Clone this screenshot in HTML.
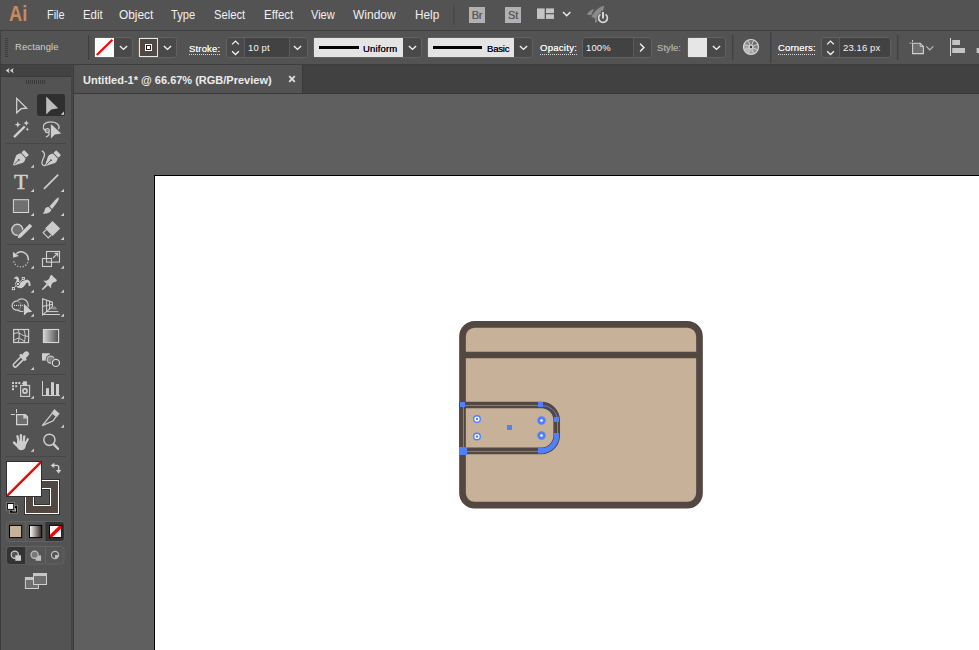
<!DOCTYPE html>
<html><head><meta charset="utf-8"><title>Adobe Illustrator</title>
<style>
*{box-sizing:border-box;margin:0;padding:0}
html,body{width:979px;height:650px;overflow:hidden;background:#535353;font-family:"Liberation Sans",sans-serif;}
#app{position:relative;width:979px;height:650px;overflow:hidden;background:#535353}
.abs{position:absolute}
.t{position:absolute;white-space:nowrap;line-height:1;transform-origin:0 0}
/* menu */
#menubar{position:absolute;left:0;top:0;width:979px;height:30px;background:#535353}
.mi{position:absolute;top:8px;font-size:12px;color:#f0f0f0;white-space:nowrap;line-height:14px;transform-origin:0 50%}
/* control bar */
#ctrl{position:absolute;left:0;top:30px;width:979px;height:35px;background:#535353;border-top:1px solid #3e3e3e;border-bottom:1px solid #3e3e3e}
.lbl{position:absolute;top:42px;font-size:9.5px;letter-spacing:0.17px;color:#f4f4f4;line-height:12px;white-space:nowrap;transform-origin:0 50%;text-shadow:0 0 0.6px #f4f4f4}
.dots{position:absolute;top:54px;height:1px;background:repeating-linear-gradient(90deg,#d8d8d8 0 1px,transparent 1px 2px)}
.box{position:absolute;top:37px;height:21px;border:1px solid #616161;background:#494949}
.val{position:absolute;top:42px;font-size:9.5px;letter-spacing:0.1px;color:#f4f4f4;line-height:12px;white-space:nowrap;transform-origin:0 50%}
.sep{position:absolute;width:1px;background:#404040;box-shadow:1px 0 0 #4c4c4c}
/* tab bar */
#tabbar{position:absolute;left:74px;top:65px;width:905px;height:29px;background:#414141;border-bottom:1px solid #393939}
#tab{position:absolute;left:0;top:0;width:229px;height:28px;background:#535353;border-right:1px solid #3a3a3a}
#canvas{position:absolute;left:74px;top:94px;width:905px;height:556px;background:#5f5f5f}
#tools{position:absolute;left:0;top:65px;width:72px;height:585px;background:#535353}
</style></head><body>
<div id="app">

<!-- MENU BAR -->
<div id="menubar">
  <div class="t" id="ailogo" style="left:8.8px;top:2.5px;font-size:22px;font-weight:bold;color:#c68a61;transform:scaleX(.83)">Ai</div>
  <div class="mi" style="left:47.4px;transform:scaleX(0.907)">File</div>
  <div class="mi" style="left:82.5px;transform:scaleX(0.95)">Edit</div>
  <div class="mi" style="left:119.3px;transform:scaleX(0.99)">Object</div>
  <div class="mi" style="left:171.2px;transform:scaleX(0.93)">Type</div>
  <div class="mi" style="left:213.8px;transform:scaleX(0.936)">Select</div>
  <div class="mi" style="left:263.8px;transform:scaleX(0.96)">Effect</div>
  <div class="mi" style="left:310.5px;transform:scaleX(0.92)">View</div>
  <div class="mi" style="left:353px">Window</div>
  <div class="mi" style="left:414.5px;transform:scaleX(0.98)">Help</div>
  <div class="sep" style="left:453px;top:5px;height:20px;background:#494949"></div>
  <div class="abs" style="left:469px;top:7px;width:16px;height:16px;background:#b1b1b1;color:#5a5a5a;font-size:11px;text-align:center;line-height:17px;letter-spacing:-0.2px;text-shadow:0 0 0.5px #5a5a5a">Br</div>
  <div class="abs" style="left:505px;top:7px;width:16px;height:16px;background:#b1b1b1;color:#5a5a5a;font-size:11px;text-align:center;line-height:17px;letter-spacing:-0.2px;text-shadow:0 0 0.5px #5a5a5a">St</div>
  <svg class="abs" style="left:530px;top:0" width="90" height="30" viewBox="530 0 90 30">
    <g fill="#c4c4c4"><rect x="537" y="8.4" width="7.7" height="10.5"/><rect x="546" y="8.4" width="8" height="4.7"/><rect x="546" y="14.3" width="8" height="4.6"/></g>
    <path d="M563 12 L566.7 15.7 L570.4 12" fill="none" stroke="#ececec" stroke-width="1.4"/>
    <g fill="#8a8a8a">
      <path d="M604 5.8 C599.5 6.6 594.6 10.6 591.4 16.6 L595.4 19 C600.4 16.4 604 11.4 604 5.8 Z"/>
      <path d="M594.2 9 C591 9.6 588.2 11.8 586.8 14.6 L591.2 15.2 C591.9 13 592.9 11 594.2 9 Z"/>
      <path d="M596.8 18.6 L597.5 20.8 C596.8 21.9 596 22.6 595 23 L595 19.4 Z"/>
    </g>
    <circle cx="603" cy="18" r="5.8" fill="#535353"/>
    <line x1="603" y1="10.8" x2="603" y2="18.6" stroke="#535353" stroke-width="4.2"/>
    <path d="M600.5 14.4 A4.4 4.4 0 1 0 605.5 14.4" fill="none" stroke="#d6d6d6" stroke-width="1.7"/>
    <line x1="603" y1="12.1" x2="603" y2="18.5" stroke="#d6d6d6" stroke-width="2"/>
  </svg>
</div>

<!-- CONTROL BAR -->
<div id="ctrl"></div>
<div class="abs" style="left:0;top:31px;width:1px;height:33px;background:#404040"></div>
<!-- CONTROL BAR CONTENT -->
<div id="ctrlc">
  <!-- grip -->
  <svg class="abs" style="left:4px;top:38px" width="6" height="20" viewBox="0 0 6 20"><g fill="#3c3c3c"><rect x="1" y="0" width="3" height="1"/><rect x="1" y="2" width="3" height="1"/><rect x="1" y="4" width="3" height="1"/><rect x="1" y="6" width="3" height="1"/><rect x="1" y="8" width="3" height="1"/><rect x="1" y="10" width="3" height="1"/><rect x="1" y="12" width="3" height="1"/><rect x="1" y="14" width="3" height="1"/><rect x="1" y="16" width="3" height="1"/><rect x="1" y="18" width="3" height="1"/></g></svg>
  <div class="t" id="rectlbl" style="left:15px;top:41px;font-size:9.5px;color:#cecece;line-height:12px;letter-spacing:0.1px">Rectangle</div>
  <div class="sep" style="left:88px;top:35px;height:25px"></div>

  <!-- fill swatch -->
  <div class="box" style="left:94px;width:39px;border-radius:3px"></div>
  <div class="abs" style="left:95px;top:38px;width:19px;height:19px;background:#fff"></div>
  <svg class="abs" style="left:95px;top:38px" width="19" height="19" viewBox="0 0 19 19"><line x1="1.8" y1="17" x2="17.4" y2="1.8" stroke="#ff0000" stroke-width="2.2"/></svg>
  <svg class="abs chev" style="left:119px;top:45px" width="9" height="6" viewBox="0 0 9 6"><path d="M0.9 0.9 L4.5 4.4 L8.1 0.9" fill="none" stroke="#f4f4f4" stroke-width="1.35"/></svg>

  <!-- stroke swatch -->
  <div class="box" style="left:138px;width:39px;border-radius:3px"></div>
  <div class="abs" style="left:139px;top:38px;width:19px;height:19px;background:#534741;border:1px solid #e8e8e8"></div>
  <div class="abs" style="left:145px;top:44px;width:7px;height:7px;background:#fff"></div><div class="abs" style="left:146px;top:45px;width:5px;height:5px;background:#222"></div><div class="abs" style="left:147px;top:46px;width:3px;height:3px;background:#fff"></div>
  <svg class="abs chev" style="left:163px;top:45px" width="9" height="6" viewBox="0 0 9 6"><path d="M0.9 0.9 L4.5 4.4 L8.1 0.9" fill="none" stroke="#f4f4f4" stroke-width="1.35"/></svg>

  <!-- Stroke -->
  <div class="lbl" id="lblStroke" style="left:189px;top:43px">Stroke:</div><div class="dots" style="left:189px;width:32px"></div>
  <div class="box" style="left:226px;width:82px;border-radius:3px"></div>
  <div class="abs" style="left:244px;top:38px;width:46px;height:19px;background:#424242;border-left:1px solid #5a5a5a;border-right:1px solid #5a5a5a"></div>
  <svg class="abs" style="left:231px;top:40px" width="9" height="16" viewBox="0 0 9 16"><path d="M1.1 4.4 L4.5 1.1 L7.9 4.4 M1.1 11.2 L4.5 14.5 L7.9 11.2" fill="none" stroke="#f2f2f2" stroke-width="1.3"/></svg>
  <div class="val" id="v10pt" style="left:248px">10 pt</div>
  <svg class="abs chev" style="left:293px;top:45px" width="9" height="6" viewBox="0 0 9 6"><path d="M0.9 0.9 L4.5 4.4 L8.1 0.9" fill="none" stroke="#f4f4f4" stroke-width="1.35"/></svg>

  <!-- Uniform -->
  <div class="box" style="left:313px;width:109px;border-radius:3px"></div>
  <div class="abs" style="left:314px;top:38px;width:89px;height:19px;background:#e4e4e4"></div>
  <div class="abs" style="left:319px;top:46px;width:40px;height:3px;background:#000"></div>
  <div class="t" id="vUniform" style="left:363px;top:42px;font-size:9.5px;color:#0c0c22;text-shadow:0 0 0.5px #0c0c22;line-height:13px;letter-spacing:0.14px">Uniform</div>
  <svg class="abs chev" style="left:408px;top:45px" width="9" height="6" viewBox="0 0 9 6"><path d="M0.9 0.9 L4.5 4.4 L8.1 0.9" fill="none" stroke="#f4f4f4" stroke-width="1.35"/></svg>

  <!-- Basic -->
  <div class="box" style="left:427px;width:106px;border-radius:3px"></div>
  <div class="abs" style="left:428px;top:38px;width:86px;height:19px;background:#e4e4e4"></div>
  <div class="abs" style="left:433px;top:46px;width:49px;height:3px;background:#000"></div>
  <div class="t" id="vBasic" style="left:487px;top:42px;font-size:9.5px;color:#0c0c22;text-shadow:0 0 0.5px #0c0c22;line-height:13px;letter-spacing:-0.2px">Basic</div>
  <svg class="abs chev" style="left:519px;top:45px" width="9" height="6" viewBox="0 0 9 6"><path d="M0.9 0.9 L4.5 4.4 L8.1 0.9" fill="none" stroke="#f4f4f4" stroke-width="1.35"/></svg>

  <!-- Opacity -->
  <div class="lbl" id="lblOpacity" style="left:540px;letter-spacing:0.28px">Opacity:</div><div class="dots" style="left:540px;width:38px"></div>
  <div class="box" style="left:582px;width:70px;border-radius:3px"></div>
  <div class="abs" style="left:583px;top:38px;width:51px;height:19px;background:#424242;border-right:1px solid #5a5a5a;border-radius:2px 0 0 2px"></div>
  <div class="val" id="v100" style="left:586px">100%</div>
  <svg class="abs" style="left:639px;top:42px" width="7" height="11" viewBox="0 0 7 11"><path d="M1.1 1.8 L4.9 5.6 L1.1 9.4" fill="none" stroke="#f4f4f4" stroke-width="1.4"/></svg>

  <!-- Style -->
  <div class="t" id="lblStyle" style="left:657px;top:42px;font-size:9.5px;color:#a8a8a8;line-height:12px;text-shadow:0 0 0.6px #a8a8a8;letter-spacing:0.05px">Style:</div>
  <div class="box" style="left:687px;width:39px;border-radius:3px"></div>
  <div class="abs" style="left:688px;top:38px;width:19px;height:19px;background:#e6e6e6"></div>
  <svg class="abs chev" style="left:712px;top:45px" width="9" height="6" viewBox="0 0 9 6"><path d="M0.9 0.9 L4.5 4.4 L8.1 0.9" fill="none" stroke="#f4f4f4" stroke-width="1.35"/></svg>

  <div class="sep" style="left:732px;top:35px;height:25px"></div>
  <!-- recolor wheel -->
  <svg class="abs" style="left:742px;top:38px" width="18" height="18" viewBox="-9 -9 18 18">
    <path d="M0 0 L-2.83 -6.84 A7.4 7.4 0 0 1 2.83 -6.84 Z" fill="#787878"/><path d="M0 0 L2.83 -6.84 A7.4 7.4 0 0 1 6.84 -2.83 Z" fill="#6c6c6c"/><path d="M0 0 L6.84 -2.83 A7.4 7.4 0 0 1 6.84 2.83 Z" fill="#828282"/><path d="M0 0 L6.84 2.83 A7.4 7.4 0 0 1 2.83 6.84 Z" fill="#999999"/><path d="M0 0 L2.83 6.84 A7.4 7.4 0 0 1 -2.83 6.84 Z" fill="#a8a8a8"/><path d="M0 0 L-2.83 6.84 A7.4 7.4 0 0 1 -6.84 2.83 Z" fill="#b8b8b8"/><path d="M0 0 L-6.84 2.83 A7.4 7.4 0 0 1 -6.84 -2.83 Z" fill="#a4a4a4"/><path d="M0 0 L-6.84 -2.83 A7.4 7.4 0 0 1 -2.83 -6.84 Z" fill="#8c8c8c"/>
    <g stroke="#d6d6d6" stroke-width="0.9"><line x1="0" y1="0" x2="6.84" y2="2.83"/><line x1="0" y1="0" x2="2.83" y2="6.84"/><line x1="0" y1="0" x2="-2.83" y2="6.84"/><line x1="0" y1="0" x2="-6.84" y2="2.83"/><line x1="0" y1="0" x2="-6.84" y2="-2.83"/><line x1="0" y1="0" x2="-2.83" y2="-6.84"/><line x1="0" y1="0" x2="2.83" y2="-6.84"/><line x1="0" y1="0" x2="6.84" y2="-2.83"/></g>
    <circle r="7.5" fill="none" stroke="#d8d8d8" stroke-width="1.2"/>
    <circle r="2.5" fill="#d0d0d0"/><circle r="1.2" fill="#3c3c3c"/>
  </svg>
  <div class="sep" style="left:770px;top:32px;height:31px"></div>

  <!-- Corners -->
  <div class="lbl" id="lblCorners" style="left:778px">Corners:</div><div class="dots" style="left:778px;width:38px"></div>
  <div class="box" style="left:821px;width:70px;border-radius:3px"></div>
  <div class="abs" style="left:839px;top:38px;width:51px;height:19px;background:#424242;border-left:1px solid #5a5a5a;border-radius:0 2px 2px 0"></div>
  <svg class="abs" style="left:826px;top:40px" width="9" height="16" viewBox="0 0 9 16"><path d="M1.1 4.4 L4.5 1.1 L7.9 4.4 M1.1 11.2 L4.5 14.5 L7.9 11.2" fill="none" stroke="#f2f2f2" stroke-width="1.3"/></svg>
  <div class="val" id="v2316" style="left:843px">23.16 px</div>
  <div class="sep" style="left:897px;top:35px;height:25px"></div>

  <!-- shape icon -->
  <svg class="abs" style="left:906px;top:38px" width="30" height="18" viewBox="906 38 30 18">
    <path d="M912.5 40 V42 M909.6 43.2 H911.6" stroke="#c4c4c4" stroke-width="1" fill="none"/>
    <path d="M912.6 43.2 H920.2 L923.4 46.4 V53.6 H912.6 Z" fill="#6f6f6f" stroke="#d0d0d0" stroke-width="1.1"/>
    <path d="M920.2 43.2 V46.4 H923.4" fill="none" stroke="#d0d0d0" stroke-width="0.9"/>
    <path d="M926.3 46.3 L929.8 49.8 L933.3 46.3" fill="none" stroke="#bdbdbd" stroke-width="1.2"/>
  </svg>
  <!-- align icon -->
  <svg class="abs" style="left:946px;top:36px" width="33" height="22" viewBox="946 36 33 22">
    <rect x="950" y="38" width="1" height="18" fill="#d6d6d6"/>
    <rect x="952.2" y="40" width="7.8" height="5" fill="#c4c4c4"/>
    <rect x="952.2" y="48" width="12.8" height="5" fill="#c4c4c4"/>
    <rect x="976.6" y="48" width="3" height="5" fill="#c4c4c4"/>
  </svg>
</div>


<!-- TOOLS -->
<div id="tools"></div>
<!-- TOOLS PANEL -->
<svg class="abs" id="toolsvg" style="left:0;top:0" width="80" height="650" viewBox="0 0 80 650">
  <defs>
    <linearGradient id="gradTool" x1="0" x2="1" y1="0" y2="0"><stop offset="0" stop-color="#d4d4d4"/><stop offset="1" stop-color="#4c4c4c"/></linearGradient>
    <linearGradient id="gradSw" x1="0" x2="1" y1="0" y2="0"><stop offset="0" stop-color="#ffffff"/><stop offset="1" stop-color="#2e2320"/></linearGradient>
    <path id="tri" d="M0 0 L0 -3.3 L-3.3 0 Z" fill="#cfcfcf"/>
    <clipPath id="clipFill"><rect x="7" y="462" width="34" height="34"/></clipPath>
  </defs>
  <!-- frame -->
  <rect x="0" y="65" width="1" height="585" fill="#3c3c3c"/>
  <rect x="71" y="65" width="1" height="585" fill="#434343"/><rect x="72" y="65" width="1" height="585" fill="#484848"/><rect x="73" y="65" width="1" height="585" fill="#3a3a3a"/>
  <rect x="1" y="65" width="70" height="11" fill="#424242"/><rect x="1" y="76" width="70" height="1" fill="#3b3b3b"/>
  <!-- collapse arrows -->
  <g fill="#d4d4d4">
    <path d="M9.5 67.9 L5.7 70.6 L9.5 73.3 L8.7 70.6 Z"/>
    <path d="M13.6 67.9 L9.8 70.6 L13.6 73.3 L12.8 70.6 Z"/>
  </g>
  <!-- grip -->
  <g fill="#3b3b3b">
    <rect x="26" y="80" width="1" height="4"/><rect x="28" y="80" width="1" height="4"/><rect x="30" y="80" width="1" height="4"/><rect x="32" y="80" width="1" height="4"/><rect x="34" y="80" width="1" height="4"/><rect x="36" y="80" width="1" height="4"/><rect x="38" y="80" width="1" height="4"/><rect x="40" y="80" width="1" height="4"/><rect x="42" y="80" width="1" height="4"/><rect x="44" y="80" width="1" height="4"/>
  </g>
  <!-- separators -->
  <g fill="#474747">
    <rect x="6" y="143" width="60" height="1"/><rect x="6" y="244" width="60" height="1"/><rect x="6" y="321" width="60" height="1"/><rect x="6" y="374" width="60" height="1"/><rect x="6" y="403" width="60" height="1"/><rect x="6" y="456" width="60" height="1"/>
  </g>
  <!-- sub-tool triangles -->
  <use href="#tri" x="64.0" y="114.8"/>
  <use href="#tri" x="34.0" y="167.8"/>
  <use href="#tri" x="34.0" y="192.0"/><use href="#tri" x="64.0" y="192.0"/>
  <use href="#tri" x="34.0" y="216.0"/><use href="#tri" x="64.0" y="216.0"/>
  <use href="#tri" x="34.0" y="240.0"/><use href="#tri" x="64.0" y="240.0"/>
  <use href="#tri" x="34.0" y="268.8"/><use href="#tri" x="64.0" y="268.8"/>
  <use href="#tri" x="34.0" y="292.8"/><use href="#tri" x="64.0" y="292.8"/>
  <use href="#tri" x="34.0" y="316.8"/><use href="#tri" x="64.0" y="316.8"/>
  <use href="#tri" x="34.0" y="370.1"/>
  <use href="#tri" x="34.0" y="398.8"/><use href="#tri" x="64.0" y="398.8"/>
  <use href="#tri" x="64.0" y="427.8"/>
  <use href="#tri" x="34.0" y="451.8"/>

  <!-- row1: selection / direct selection -->
  <path d="M16.7 98.4 L16.7 112.8 L21.2 108.7 L26.7 108.2 Z" fill="none" stroke="#d6d6d6" stroke-width="1.2" stroke-linejoin="miter"/>
  <rect x="37" y="94" width="28" height="22" rx="2.5" fill="#2f2f2f"/>
  <path d="M46.2 96.6 L46.2 114.6 L51.3 109.4 L58.2 108.3 Z" fill="#bcbcbc"/>
  <use href="#tri" x="64.0" y="114.8"/>

  <!-- row2: magic wand / lasso -->
  <g fill="#cfcfcf">
    <path d="M13.2 136.3 L24 125.6 L25.6 127.2 L14.8 137.9 Z"/>
    <path d="M17.80 121.40 L18.68 123.72 L21.00 124.60 L18.68 125.48 L17.80 127.80 L16.92 125.48 L14.60 124.60 L16.92 123.72 Z"/>
    <path d="M26.30 120.20 L27.08 122.32 L29.20 123.10 L27.08 123.88 L26.30 126.00 L25.52 123.88 L23.40 123.10 L25.52 122.32 Z"/>
    <path d="M27.30 127.20 L27.87 128.63 L29.30 129.20 L27.87 129.77 L27.30 131.20 L26.73 129.77 L25.30 129.20 L26.73 128.63 Z"/>
  </g>
  <g fill="none" stroke="#cdcdcd" stroke-width="1.25" stroke-linecap="round">
    <path d="M58.7 128.8 C60 125.6 57.4 122 51 121.9 C45 121.9 42.5 125 43.4 128 C43.8 129.2 44.4 129.9 45.3 130.4"/>
    <circle cx="47.3" cy="130.5" r="2"/>
    <path d="M48.7 132.2 C49.7 134.4 48.7 136 46.3 136.8"/>
  </g>
  <path d="M46.6 129.5 L48.2 130.5 L46.6 131.5 Z" fill="#cdcdcd"/>
  <path d="M50.9 124 L50.9 138.4 L54.9 134.5 L61.2 133.6 Z" fill="#cdcdcd" stroke="#535353" stroke-width="0.8" paint-order="stroke"/>

  <!-- row3: pen / curvature -->
  <g transform="translate(13.4 165.2) rotate(45.7)">
    <path d="M-0.8 -0.3 L-5 -8.6 Q-5.5 -10.6 -3.5 -13.7 L3.5 -13.7 Q5.5 -10.6 5 -8.6 L0.8 -0.3 Q0 0.4 -0.8 -0.3 Z" fill="#cdcdcd"/>
    <line x1="0" y1="-1.4" x2="0" y2="-7.2" stroke="#535353" stroke-width="0.9"/>
    <circle cx="0" cy="-7.6" r="1" fill="#535353"/>
    <rect x="-3.45" y="-18.3" width="6.9" height="3.8" rx="0.8" fill="#cdcdcd"/>
  </g>
  <g transform="translate(45.5 165.5) rotate(45.7)">
    <path d="M-0.8 -0.3 L-5 -8.6 Q-5.5 -10.6 -3.5 -13.7 L3.5 -13.7 Q5.5 -10.6 5 -8.6 L0.8 -0.3 Q0 0.4 -0.8 -0.3 Z" fill="#cdcdcd"/>
    <line x1="0" y1="-1.4" x2="0" y2="-7.2" stroke="#535353" stroke-width="0.9"/>
    <circle cx="0" cy="-7.6" r="1" fill="#535353"/>
    <rect x="-3.45" y="-18.3" width="6.9" height="3.8" rx="0.8" fill="#cdcdcd"/>
  </g>
  <path d="M42.2 151.2 C44.6 152.4 45.2 154.6 43.8 157.4 C42.2 160.4 40.8 163 42.6 164.8 C43.4 165.5 44.4 165.6 45.2 165.5" fill="none" stroke="#cdcdcd" stroke-width="1.3" stroke-linecap="round"/>

  <!-- row4: type / line -->
  <text x="0" y="0" transform="translate(14.1 188.8) scale(1.07 1)" font-family="'Liberation Serif',serif" font-size="21.2" fill="#d0d0d0" stroke="#d0d0d0" stroke-width="0.45">T</text>
  <line x1="44" y1="188.8" x2="58.2" y2="174.6" stroke="#cfcfcf" stroke-width="1.7"/>

  <!-- row5: rectangle / brush -->
  <rect x="13.4" y="199.7" width="15.2" height="12.8" fill="#707070" stroke="#d8d8d8" stroke-width="1"/>
  <g fill="#cdcdcd" transform="translate(-0.8 0)">
    <path d="M59.3 197.6 C60.6 198.6 58 203.4 52.9 208.9 L50.3 206.5 C55.2 201 58.4 197 59.3 197.6 Z"/>
    <path d="M49.6 207.2 L52.1 209.6 C51.6 212.6 48.2 214.2 43.2 213.7 C45.6 212.6 45.1 210.2 46 208.6 C46.9 207.3 48.4 206.8 49.6 207.2 Z"/>
  </g>

  <!-- row6: shaper / eraser -->
  <circle cx="17.3" cy="229.8" r="5.5" fill="#707070" stroke="#cfcfcf" stroke-width="1.4"/>
  <g transform="translate(17.7 238.3) rotate(45)">
    <path d="M0 0 L-1.8 -2.8 L-1.8 -18.8 L1.8 -18.8 L1.8 -2.8 Z" fill="#cfcfcf" stroke="#535353" stroke-width="1.2" paint-order="stroke"/>
  </g>
  <path d="M52.5 220.9 L60.1 228.5 L52.6 236.1 L45 228.5 Z" fill="#cbcbcb"/>
  <path d="M46 229.9 L43.1 232.7 L48.3 237.9 L51.1 235" fill="none" stroke="#cfcfcf" stroke-width="1.2" stroke-linejoin="round"/>

  <!-- row7: rotate / scale -->
  <g fill="none" stroke="#cfcfcf">
    <path d="M16.4 253.6 A7.3 7.3 0 0 1 28.2 260.4" stroke-width="1.5"/>
    <path d="M27.7 262.3 A7.3 7.3 0 0 1 13.8 261.4" stroke-width="1.3" stroke-dasharray="1.1 1.75"/>
  </g>
  <path d="M12.9 251.8 L13.1 257.8 L18.8 256 Z" fill="#cfcfcf"/>
  <g fill="none" stroke="#cfcfcf" stroke-width="1.1">
    <rect x="46.5" y="251.5" width="13" height="10.6"/>
    <rect x="42.5" y="258.5" width="9" height="8"/>
    <path d="M53 258 L57.6 253.4 M54.6 253.4 H57.7 V256.5"/>
  </g>

  <!-- row8: width / puppet pin -->
  <path d="M14 279.2 C14 276.4 17.4 275.4 18.4 277.6 C19.2 279.4 19.2 280.6 19.8 281.4 C21.4 281.2 23.6 280.6 25.4 280 C28.6 278.8 31 281.4 30.5 286 L28.6 286 C28.8 283.6 28.2 282.4 27.2 282.6 C25.6 283 24.8 287.6 20.8 288.2 C17.6 288.4 15.8 287 15.6 284.6 C15.4 282.4 16.8 281 16.6 279.4 C16.4 278.2 15 278.4 14 279.2 Z" fill="#cfcfcf"/>
  <line x1="13.6" y1="288.3" x2="23.3" y2="278.5" stroke="#535353" stroke-width="2"/>
  <line x1="13.6" y1="288.3" x2="23.3" y2="278.5" stroke="#cfcfcf" stroke-width="0.9"/>
  <circle cx="17.9" cy="284" r="1.7" fill="#d6d6d6" stroke="#535353" stroke-width="1"/>
  <circle cx="17.9" cy="284" r="2.6" fill="none" stroke="#cfcfcf" stroke-width="0.6"/>
  <rect x="22.3" y="277.4" width="2.1" height="2.1" fill="#535353" stroke="#d6d6d6" stroke-width="0.9"/>
  <rect x="12.3" y="287.4" width="2.3" height="2.3" fill="#535353" stroke="#d6d6d6" stroke-width="0.9"/>
  <g transform="translate(42.1 289.7) rotate(45)" fill="#cdcdcd">
    <path d="M-0.7 -0.4 Q0 0.5 0.7 -0.4 L1 -7.4 L-1 -7.4 Z"/>
    <path d="M-5.7 -7.3 L5.7 -7.3 C3.4 -8.6 2.6 -10.5 2.7 -12.8 L4 -15.2 L4 -17.2 L-4 -17.2 L-4 -15.2 L-2.7 -12.8 C-2.6 -10.5 -3.4 -8.6 -5.7 -7.3 Z"/>
  </g>

  <!-- row9: shape builder / perspective grid -->
  <path d="M17.1 301.13 A4.5 4.5 0 1 0 17.76 309.95 A6.3 6.3 0 1 0 17.1 301.13 Z" fill="none" stroke="#cfcfcf" stroke-width="1.2"/>
  <path d="M17.1 301.13 A4.5 4.5 0 0 1 17.76 309.95" fill="none" stroke="#8c8c8c" stroke-width="1"/>
  <g fill="#f0f0f0"><rect x="14" y="304.9" width="1" height="1"/><rect x="16" y="304.9" width="1" height="1"/><rect x="18.1" y="304.9" width="1" height="1"/><rect x="20.1" y="304.9" width="1" height="1"/><rect x="22.2" y="304.9" width="1" height="1"/></g>
  <path d="M23.9 303.7 L23.9 315.6 L27.3 312.4 L32.2 311.7 Z" fill="#cfcfcf" stroke="#535353" stroke-width="1" paint-order="stroke"/>
  <g fill="none" stroke="#d2d2d2" stroke-width="1.1">
    <path d="M42.6 298.8 V314.8 L52.4 306.6 V302.2 Z" stroke-linejoin="miter"/>
    <path d="M46.6 300.2 V311.4 M49.6 301.2 V309 M42.6 306.4 L52.4 304.3" stroke-width="1"/>
    <path d="M43 314.5 H60 M46.8 311.6 H58.4" stroke-width="1"/>
  </g>
  <path d="M50.2 309.4 L53 306.6 L55.4 306.6 L57.2 309.4 Z" fill="#8c8c8c"/>

  <!-- row10: mesh / gradient -->
  <g fill="none" stroke="#cfcfcf" stroke-width="1.2">
    <rect x="13.6" y="329.5" width="15" height="13"/>
    <path d="M18 329.5 C19.6 333 19.8 338 18 342.5 M23.8 329.5 C25.8 334 25.6 338 24 342.5 M13.5 334.2 C16 332.6 18 332.4 20 333.5 C22 334.8 24 336.3 28.6 336.4 M13.5 340.8 C16 338.6 18 338 19.5 338.4 C21.5 339 23 340.5 24.4 341.4" stroke-width="1"/>
  </g>
  <rect x="43.4" y="329.5" width="15.2" height="13" fill="url(#gradTool)" stroke="#d8d8d8" stroke-width="1.1"/>

  <!-- row11: eyedropper / blend -->
  <g transform="translate(13.9 366.4) rotate(45)">
    <path d="M-1.9 -1.6 Q-1.9 0 0 0 Q1.9 0 1.9 -1.6 L1.9 -11.8 L-1.9 -11.8 Z" fill="none" stroke="#cdcdcd" stroke-width="1.5"/>
    <rect x="-4.2" y="-14.2" width="8.4" height="2.8" rx="0.7" fill="#cdcdcd"/>
    <rect x="-2.6" y="-20.3" width="5.2" height="7.4" rx="2.6" fill="#cdcdcd"/>
  </g>
  <rect x="42" y="353.2" width="7.8" height="7.4" fill="#cdcdcd"/>
  <circle cx="50.7" cy="359.6" r="5" fill="#535353"/>
  <circle cx="50.7" cy="359.6" r="3.6" fill="#868686" stroke="#cdcdcd" stroke-width="1.1"/>
  <circle cx="55.9" cy="362.9" r="4.9" fill="#535353"/>
  <circle cx="55.9" cy="362.9" r="3.6" fill="#535353" stroke="#dadada" stroke-width="1.2"/>

  <!-- row12: symbol sprayer / graph -->
  <g fill="#cfcfcf">
    <rect x="12" y="382" width="2" height="2"/><rect x="15.2" y="382" width="2" height="2"/><rect x="18.3" y="382" width="2" height="2"/>
    <rect x="12" y="385.2" width="2" height="2"/><rect x="15.2" y="385.2" width="2" height="2"/>
    <rect x="12" y="388.2" width="2" height="2"/>
    <rect x="23" y="381.3" width="3.9" height="3.8"/>
    <rect x="22" y="382.8" width="1.2" height="1.4"/>
  </g>
  <rect x="20.6" y="385.4" width="9" height="11" fill="#5a5a5a" stroke="#cfcfcf" stroke-width="1.1"/>
  <circle cx="25" cy="391" r="2.1" fill="none" stroke="#cfcfcf" stroke-width="1.6"/>
  <g fill="#cfcfcf">
    <rect x="42" y="381" width="1" height="15"/><rect x="42" y="395" width="18" height="1"/>
    <rect x="46" y="388.2" width="3" height="7"/><rect x="51" y="382.2" width="3" height="13"/><rect x="56" y="384" width="3" height="11.2"/>
  </g>

  <!-- row13: artboard / slice -->
  <g fill="#d2d2d2"><rect x="16" y="409" width="1" height="4"/><rect x="10.8" y="414" width="4.2" height="1"/></g>
  <path d="M16.6 414.6 H25.4 L27.5 416.8 V424.6 H16.6 Z" fill="#6e6e6e" stroke="#d4d4d4" stroke-width="1.2"/>
  <path d="M23.3 414.6 H25.4 L27.5 416.8 V418.4 H23.3 Z" fill="#c8c8c8"/>
  <path d="M54.4 409.5 L59.2 413.7 L56.5 417 L51.9 413 Z" fill="#cdcdcd" stroke="#cdcdcd" stroke-width="0.8" stroke-linejoin="round"/>
  <path d="M52.2 413.4 L42.3 425.7 L53.2 420.8 L55.8 416.9" fill="none" stroke="#cdcdcd" stroke-width="1.3" stroke-linejoin="miter"/>

  <!-- row14: hand / zoom -->
  <g fill="none" stroke="#cdcdcd" stroke-linecap="round">
    <path d="M18.5 441.4 L17.4 436.1" stroke-width="2.2"/><path d="M20.9 441 L20.9 435.1" stroke-width="2.4"/><path d="M23.7 441.4 L24.3 436.3" stroke-width="2.3"/><path d="M25.7 443 L27.8 439.2" stroke-width="2.2"/>
    <path d="M18.4 446.8 L14 442.6" stroke-width="2.5"/>
  </g>
  <path d="M17.3 440.6 L26.7 441.6 C26.6 444 25.7 446.4 25.2 448 C24.4 449.6 22.6 450.2 21 450.2 C19.4 450.2 18.4 449.4 17.6 448 C16.7 446.4 16.6 444 17.3 440.6 Z" fill="#cdcdcd"/>
  <circle cx="49.4" cy="439.8" r="5.6" fill="none" stroke="#cfcfcf" stroke-width="1.45"/>
  <line x1="53.8" y1="444.4" x2="58" y2="448.8" stroke="#cfcfcf" stroke-width="2.3" stroke-linecap="round"/>

  <!-- fill / stroke -->
  <rect x="24" y="479" width="36" height="36" fill="#343434"/><rect x="25" y="480" width="34" height="34" fill="#ffffff"/><rect x="26" y="481" width="32" height="32" fill="#534741"/>
  <rect x="33" y="488" width="18" height="18" fill="#ffffff"/><rect x="34" y="489" width="16" height="16" fill="#303030"/><rect x="35" y="490" width="14" height="14" fill="#535353"/>
  <rect x="7" y="462" width="34" height="34" fill="#ffffff"/>
  <line x1="41.6" y1="461.4" x2="6.4" y2="496.6" stroke="#ff0000" stroke-width="2.4" clip-path="url(#clipFill)"/>
  <rect x="6.5" y="461.5" width="35" height="35" fill="none" stroke="#303030" stroke-width="1"/>
  <!-- swap arrow -->
  <path d="M54 465.4 H56.9 Q58.7 465.4 58.7 467.2 V470.4" fill="none" stroke="#d2d2d2" stroke-width="1.4"/>
  <path d="M50.6 465.4 L54.3 462.8 L54.3 468 Z" fill="#d2d2d2"/>
  <path d="M58.6 473.5 L55.8 470.1 L61.3 470.1 Z" fill="#d2d2d2"/>
  <!-- default fill/stroke -->
  <rect x="9.5" y="505.4" width="8" height="7.8" fill="#000" stroke="#7a7a7a" stroke-width="1"/>
  
  <rect x="6.5" y="502.6" width="8" height="7.6" fill="#000" stroke="#7a7a7a" stroke-width="1"/>
  <rect x="7.9" y="504" width="5.3" height="4.9" fill="#ffffff"/>
  <rect x="14.9" y="508.2" width="0.9" height="3" fill="#d0d0d0"/><rect x="12.2" y="510.6" width="3.6" height="0.8" fill="#d0d0d0"/>

  <!-- color mode row -->
  <rect x="6.5" y="521.5" width="57.5" height="20" rx="3" fill="#555555" stroke="#626262" stroke-width="1"/>
  <path d="M45.5 522 H61 Q64 522 64 525 V538 Q64 541 61 541 H45.5 Z" fill="#333333"/>
  <rect x="25" y="522" width="1" height="19" fill="#626262"/>
  <rect x="9.5" y="525.4" width="12.2" height="12.2" fill="#c7b299" stroke="#000" stroke-width="1"/>
  <rect x="29.5" y="525.4" width="12.2" height="12.2" fill="url(#gradSw)" stroke="#000" stroke-width="1"/>
  <rect x="49.5" y="525.4" width="12.2" height="12.2" fill="#ffffff" stroke="#000" stroke-width="1"/>
  <path d="M61.2 526 L61.2 528.4 L52.4 537.1 L50 537.1 L50 534.8 L58.8 526 Z" fill="#ff0000"/>

  <!-- draw mode row -->
  <rect x="7" y="546.5" width="57" height="17.5" rx="3" fill="#555555" stroke="#636363" stroke-width="1"/>
  <path d="M25.5 547 H10 Q7 547 7 550 V561 Q7 564 10 564 H25.5 Z" fill="#333333"/>
  <rect x="45" y="547" width="1" height="16.5" fill="#636363"/><rect x="25.4" y="547" width="1" height="16.5" fill="#636363"/>
  <circle cx="14.8" cy="554.7" r="3.6" fill="#555" stroke="#cfcfcf" stroke-width="1.2"/>
  <rect x="15.3" y="555.3" width="5.7" height="5.5" fill="#cfcfcf"/>
  <rect x="35.6" y="555.4" width="5.5" height="5.4" fill="#bdbdbd"/>
  <circle cx="34.6" cy="554.7" r="3.6" fill="#787878" stroke="#bdbdbd" stroke-width="1.2"/>
  <circle cx="55" cy="555" r="3.6" fill="#555" stroke="#bdbdbd" stroke-width="1.2"/>
  <path d="M55 555 H58.6 A3.6 3.6 0 0 1 55 558.6 Z" fill="#bdbdbd"/>

  <!-- screen mode -->
  <rect x="25.4" y="577.5" width="13" height="11" fill="#6f6f6f" stroke="#d0d0d0" stroke-width="1"/>
  <rect x="25" y="577" width="14" height="3" fill="#c6c6c6"/>
  <rect x="33.5" y="573.5" width="13" height="11" fill="#6f6f6f" stroke="#d0d0d0" stroke-width="1"/>
  <rect x="33" y="573" width="14" height="3" fill="#c6c6c6"/>
</svg>


<!-- TAB BAR -->
<div id="tabbar"><div id="tab">
    <div class="t" id="tabtitle" style="left:9px;top:9px;font-size:11px;font-weight:bold;color:#ececec;line-height:12px">Untitled-1* @ 66.67% (RGB/Preview)</div>
    <svg class="abs" style="left:214px;top:10px" width="8" height="8" viewBox="0 0 8 8"><path d="M1.2 1.2 L6.8 6.8 M6.8 1.2 L1.2 6.8" stroke="#e0e0e0" stroke-width="1.8"/></svg>
  </div></div>

<!-- CANVAS -->
<div id="canvas">
  <div class="abs" id="artboard" style="left:80px;top:81px;width:830px;height:480px;background:#fff;border:1px solid #000"></div>
</div>

<!-- ARTWORK -->
<svg class="abs" id="art" style="left:0;top:0" width="979" height="650" viewBox="0 0 979 650">
  <g fill="#c7b299" stroke="#534741" stroke-width="6.67">
    <rect x="462.5" y="324.4" width="237" height="180.7" rx="12.2" ry="12.2"/>
    <line x1="462.5" y1="355" x2="699.5" y2="355"/>
    <path d="M462.5 405 H541.3 A15.4 15.4 0 0 1 556.7 420.4 V435.4 A15.4 15.4 0 0 1 541.3 450.8 H462.5 Z"/>
  </g>
  <!-- selection -->
  <g fill="none" stroke="#4f80ff" stroke-width="1">
    <path d="M463.5 405.5 H541.3 A15.4 15.4 0 0 1 557.5 420.4 V435.4"/>
    <path d="M463.5 405.5 V451.5 H541"/>
  </g>
  <path d="M556.6 435.4 A15.3 15.3 0 0 1 541.3 450.7" fill="none" stroke="#4f80ff" stroke-width="5"/>
  <g fill="#4f80ff">
    <rect x="460" y="402" width="5" height="5"/>
    <rect x="538" y="402" width="5" height="5"/>
    <rect x="554" y="417" width="5" height="5"/>
    <rect x="554" y="433" width="5" height="5"/>
    <rect x="538" y="448" width="5.5" height="5.5"/>
    <rect x="459" y="447" width="8" height="8"/>
    <rect x="507" y="425" width="5" height="5"/>
  </g>
  <g>
    <circle cx="477" cy="419" r="3.3" fill="#fff" stroke="#4f80ff" stroke-width="1.4"/>
    <circle cx="477" cy="419" r="1.2" fill="#4f80ff"/>
    <circle cx="477" cy="436.5" r="3.3" fill="#fff" stroke="#4f80ff" stroke-width="1.4"/>
    <circle cx="477" cy="436.5" r="1.2" fill="#4f80ff"/>
    <circle cx="541.5" cy="420.5" r="4.2" fill="#4f80ff"/>
    <circle cx="541.5" cy="420.5" r="1.3" fill="#fff"/>
    <circle cx="541.5" cy="435.5" r="4.2" fill="#4f80ff"/>
    <circle cx="541.5" cy="435.5" r="1.3" fill="#fff"/>
  </g>
</svg>

</div>
</body></html>
